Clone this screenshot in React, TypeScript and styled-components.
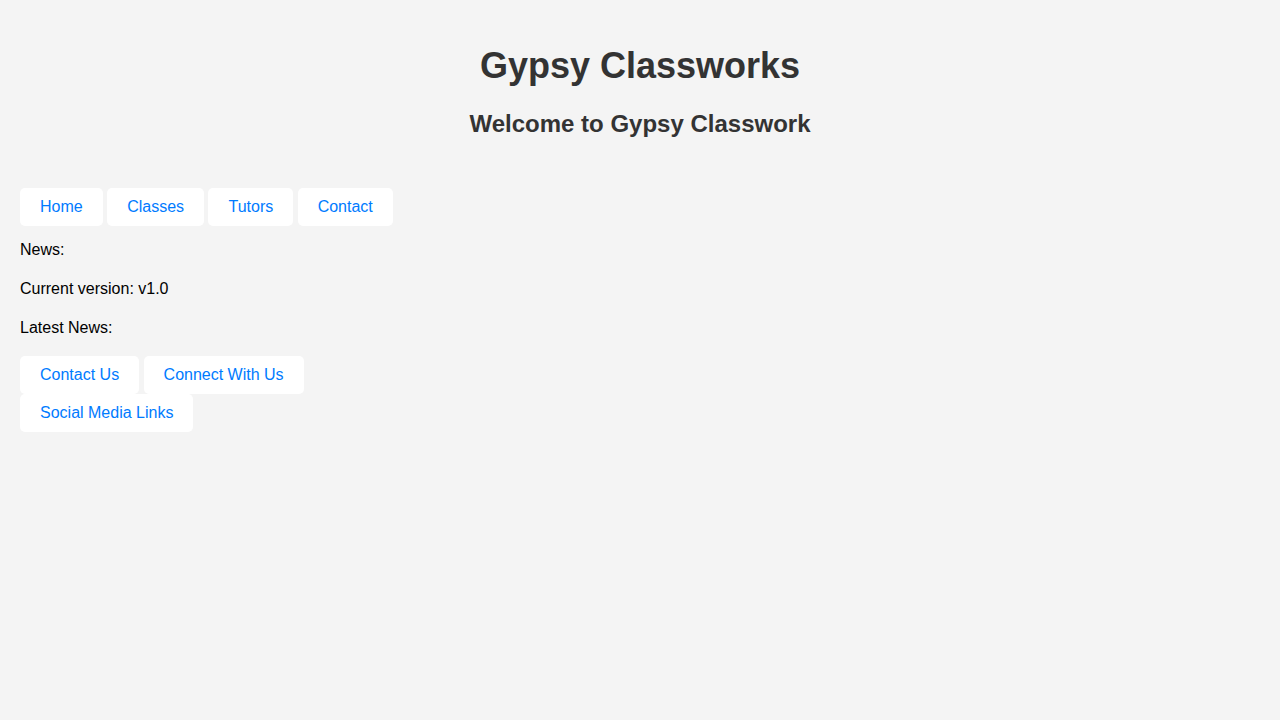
import React from "react";
import styled, { createGlobalStyle } from "styled-components";

const GlobalStyle = createGlobalStyle`
  html, body {
    margin: 0;
    padding: 0;
  }
  body {
    background: #f4f4f4;
    font-family: "Liberation Sans", Arial, Helvetica, sans-serif;
    font-size: 16px;
    color: #000;
  }
`;

const Page = styled.div`
  padding: 20px;
`;

const Header = styled.header`
  text-align: center;
  color: #333;
  padding: 25.1px 0 49.5px;
`;

const Title = styled.h1`
  margin: 0 0 23.4px;
  font-size: 36px;
  font-weight: bold;
`;

const Subtitle = styled.h2`
  margin: 0;
  font-size: 24px;
  font-weight: bold;
`;

const ButtonRow = styled.nav`
  display: flex;
  flex-wrap: wrap;
  gap: 4.45px;
`;

const LinkButton = styled.a`
  display: inline-block;
  padding: 10px 20px;
  background: #fff;
  color: #007bff;
  border-radius: 5px;
  text-decoration: none;
  line-height: 18px;
  font-size: 16px;
  cursor: pointer;
`;

const Line = styled.p<{ $top: number }>`
  margin: ${(p) => p.$top}px 0 0;
`;

const Footer = styled.footer`
  margin-top: 18.3px;
  display: flex;
  flex-direction: column;
`;

export default function App() {
  return (
    <>
      <GlobalStyle />
      <Page>
        <Header>
          <Title>Gypsy Classworks</Title>
          <Subtitle>Welcome to Gypsy Classwork</Subtitle>
        </Header>
        <ButtonRow>
          <LinkButton href="#">Home</LinkButton>
          <LinkButton href="#">Classes</LinkButton>
          <LinkButton href="#">Tutors</LinkButton>
          <LinkButton href="#">Contact</LinkButton>
        </ButtonRow>
        <section>
          <Line $top={15.3}>News:</Line>
          <Line $top={20.6}>Current version: v1.0</Line>
          <Line $top={21.6}>Latest News:</Line>
        </section>
        <Footer>
          <ButtonRow>
            <LinkButton href="#">Contact Us</LinkButton>
            <LinkButton href="#">Connect With Us</LinkButton>
          </ButtonRow>
          <ButtonRow>
            <LinkButton href="#">Social Media Links</LinkButton>
          </ButtonRow>
        </Footer>
      </Page>
    </>
  );
}
